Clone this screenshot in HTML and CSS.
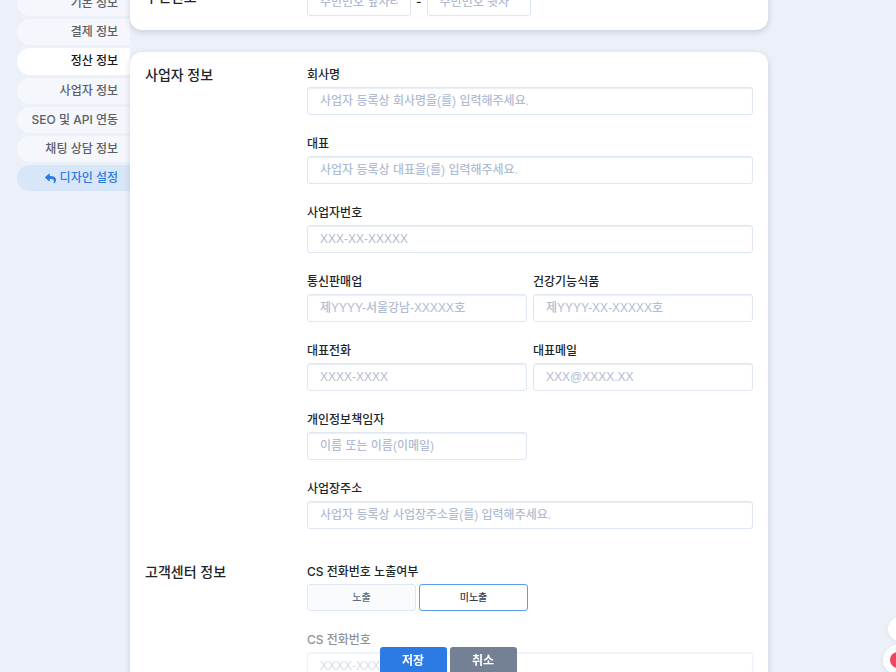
FILE: index.html
```html
<!DOCTYPE html>
<html lang="ko">
<head>
    <meta charset="UTF-8">
    <meta name="viewport" content="width=device-width, initial-scale=1.0">
    <title>정산 정보</title>
    <link rel="stylesheet" href="styles.css">
</head>
<body>

    <div class="page">
        <nav class="side-menu">
            <a href="#basic">기본 정보</a>
            <a href="#payment">결제 정보</a>
            <a href="#settlement" class="active">정산 정보</a>
            <a href="#business">사업자 정보</a>
            <a href="#seo">SEO 및 API 연동</a>
            <a href="#chat">채팅 상담 정보</a>
            <a href="#design" class="design">
                <svg class="reply-icon" viewBox="0 0 512 512" aria-hidden="true"><path d="M8.300 189.800 184.300 37.900C199.700 24.500 224 35.300 224 56v80c160.600 1.800 288 34 288 186.300 0 61.400-39.600 122.300-83.300 154.100-13.700 9.900-33.100-2.500-28.100-18.600C445.900 312.800 379.100 274.200 224 272v88c0 20.700-24.300 31.500-39.700 18.200l-176-152c-11.100-9.600-11.100-26.800 0-36.400z"/></svg>
                디자인 설정
            </a>
        </nav>

        <main class="content">
            <section class="card">
                <div class="row">
                    <h2>주민번호</h2>
                    <div class="resident">
                        <input type="text" placeholder="주민번호 앞자리" aria-label="주민번호 앞자리">
                        <span>-</span>
                        <input type="text" placeholder="주민번호 뒷자" aria-label="주민번호 뒷자리">
                    </div>
                </div>
            </section>

            <form class="card" id="businessForm">
                <div class="row">
                    <h2>사업자 정보</h2>
                    <div class="fields">
                        <div class="field wide">
                            <label for="company">회사명</label>
                            <input type="text" id="company" placeholder="사업자 등록상 회사명을(를) 입력해주세요.">
                        </div>
                        <div class="field wide">
                            <label for="owner">대표</label>
                            <input type="text" id="owner" placeholder="사업자 등록상 대표을(를) 입력해주세요.">
                        </div>
                        <div class="field wide">
                            <label for="businessNo">사업자번호</label>
                            <input type="text" id="businessNo" placeholder="XXX-XX-XXXXX">
                        </div>
                        <div class="field">
                            <label for="mailOrder">통신판매업</label>
                            <input type="text" id="mailOrder" placeholder="제YYYY-서울강남-XXXXX호">
                        </div>
                        <div class="field">
                            <label for="healthFood">건강기능식품</label>
                            <input type="text" id="healthFood" placeholder="제YYYY-XX-XXXXX호">
                        </div>
                        <div class="field">
                            <label for="phone">대표전화</label>
                            <input type="text" id="phone" placeholder="XXXX-XXXX">
                        </div>
                        <div class="field">
                            <label for="email">대표메일</label>
                            <input type="text" id="email" placeholder="XXX@XXXX.XX">
                        </div>
                        <div class="field first">
                            <label for="privacy">개인정보책임자</label>
                            <input type="text" id="privacy" placeholder="이름 또는 이름(이메일)">
                        </div>
                        <div class="field wide">
                            <label for="address">사업장주소</label>
                            <input type="text" id="address" placeholder="사업자 등록상 사업장주소을(를) 입력해주세요.">
                        </div>
                    </div>
                </div>

                <div class="row">
                    <h2>고객센터 정보</h2>
                    <div class="fields">
                        <div class="field wide" role="group" aria-labelledby="csShowLabel">
                            <span class="label" id="csShowLabel">CS 전화번호 노출여부</span>
                            <div class="toggle">
                                <button type="button" aria-pressed="false">노출</button>
                                <button type="button" aria-pressed="true" class="selected">미노출</button>
                            </div>
                        </div>
                        <div class="field wide disabled">
                            <label for="csPhone">CS 전화번호</label>
                            <input type="text" id="csPhone" placeholder="XXXX-XXXX" disabled>
                        </div>
                    </div>
                </div>
            </form>
        </main>
    </div>

    <div class="action-bar">
        <button type="submit" form="businessForm" class="save">저장</button>
        <button type="button" class="cancel">취소</button>
    </div>

    <button type="button" class="float-button top" aria-label="위로"></button>
    <button type="button" class="float-button chat" aria-label="채팅"><span></span></button>

</body>
</html>
```
FILE: styles.css
```css
* {
    box-sizing: border-box;
}
body {
    margin: 0;
    height: 100vh;
    overflow: hidden;
    background-color: #ebf0f9;
    color: #212529;
    font-family: Inter, "Noto Sans CJK KR", sans-serif;
    font-size: 12px;
    font-weight: 500;
    line-height: 18px;
}
button, input {
    font: inherit;
}
.page {
    display: flex;
    align-items: flex-start;
    padding: 0 128px 0 17px;
    /* the page sits scrolled down a little */
    margin-top: -26px;
}
.side-menu {
    display: flex;
    flex-direction: column;
    gap: 3px;
    width: 113px;
    padding-top: 16px;
}
.side-menu a {
    height: 26px;
    padding-right: 12px;
    border-radius: 13px 0 0 13px;
    background-color: #f5f7fc;
    color: #5c6065;
    line-height: 26px;
    text-align: right;
    text-decoration: none;
    white-space: nowrap;
}
.side-menu a.active {
    height: 27px;
    background-color: white;
    color: #16181b;
}
.side-menu a.design {
    background-color: #d8e6f9;
    color: #2c7be5;
}
.reply-icon {
    width: 11px;
    height: 11px;
    fill: currentColor;
    vertical-align: -2px;
}
.content {
    flex: 1;
    min-width: 0;
    display: flex;
    flex-direction: column;
    gap: 22px;
}
.card {
    padding: 14px 15px;
    border-radius: 12px;
    background-color: white;
    box-shadow: 0 2px 6px rgba(60, 70, 100, 0.2);
}
.row {
    display: flex;
}
.row + .row {
    margin-top: 34px;
}
h2 {
    width: 162px;
    flex: none;
    margin: 0;
    font-size: 14px;
    font-weight: 500;
    line-height: 18px;
}
.fields {
    flex: 1;
    min-width: 0;
    display: grid;
    grid-template-columns: 1fr 1fr;
    gap: 20px 6px;
}
.field {
    display: flex;
    flex-direction: column;
    gap: 3px;
    min-width: 0;
}
.field.wide {
    grid-column: 1 / -1;
}
.field.first {
    grid-column: 1;
}
.field.disabled {
    opacity: 0.5;
}
input[type="text"] {
    width: 100%;
    height: 28px;
    padding: 0 12px;
    border: 1px solid #dfe7f3;
    border-radius: 3px;
    background-color: white;
    box-shadow: inset 0 1px 1px rgba(200, 215, 235, 0.4);
    font-family: "Liberation Sans", "Noto Sans CJK KR", sans-serif;
}
input::placeholder {
    color: #b0bcd3;
    opacity: 1;
}
.resident {
    display: flex;
    align-items: center;
    gap: 5px;
}
.resident input[type="text"] {
    width: 104px;
}
.toggle {
    display: flex;
    gap: 3px;
}
.toggle button {
    width: 109px;
    height: 27px;
    padding: 0 0 2px;
    border: 1px solid #dfe7f3;
    border-radius: 3px;
    background-color: #fafbfd;
    color: #5e6e82;
    font-size: 10px;
}
.toggle button.selected {
    border-color: #5b9bee;
    background-color: white;
    color: #344050;
}
.action-bar {
    position: fixed;
    bottom: -3px;
    left: 0;
    right: 0;
    display: flex;
    justify-content: center;
    gap: 3px;
}
.action-bar button {
    width: 67px;
    height: 28px;
    padding: 0;
    border: none;
    border-radius: 3px;
    color: white;
    font-weight: 700;
}
.save {
    background-color: #2c7be5;
}
.cancel {
    background-color: #748194;
}
.float-button {
    position: fixed;
    padding: 0;
    border: none;
    border-radius: 50%;
    background-color: white;
    box-shadow: 0 1px 4px rgba(60, 70, 100, 0.1);
}
.float-button.top {
    right: -16px;
    bottom: 31px;
    width: 24px;
    height: 24px;
}
.float-button.chat {
    right: -17px;
    bottom: -3px;
    width: 30px;
    height: 30px;
}
.float-button.chat span {
    display: block;
    width: 16px;
    height: 16px;
    margin: auto;
    border-radius: 50%;
    background-color: #ee4562;
}
```
